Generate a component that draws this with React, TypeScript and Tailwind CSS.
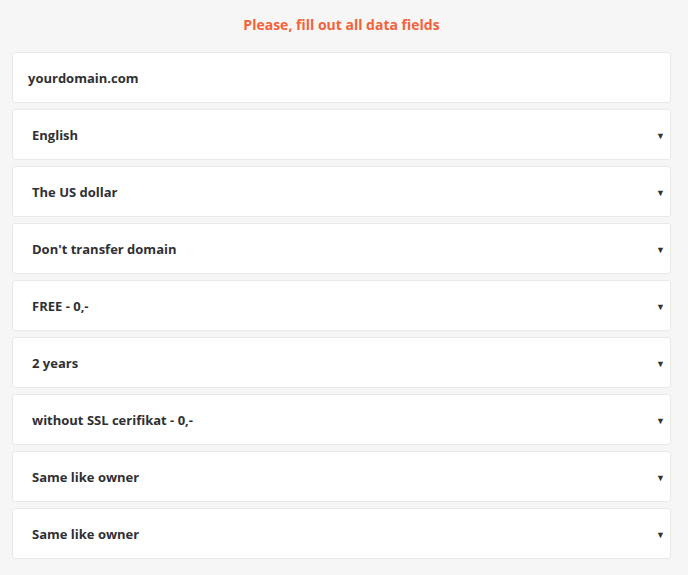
import React from "react";

const selects = [
  "English",
  "The US dollar",
  "Don't transfer domain",
  "FREE - 0,-",
  "2 years",
  "without SSL cerifikat - 0,-",
  "Same like owner",
  "Same like owner",
];

export default function App() {
  return (
    <div
      className="min-h-[575px] bg-[#f6f6f6] px-3 pb-4 pt-[15px]"
      style={{ fontFamily: '"Open Sans", sans-serif' }}
    >
      <div className="w-[659px]">
        <h1 className="text-center text-[14px] font-bold leading-[19px] text-[#f4623a]">
          Please, fill out all data fields
        </h1>
        <div className="mt-[18px] flex flex-col gap-[6px]">
          <div className="flex h-[51px] items-center rounded-[3px] border border-[#e9e9e9] bg-white pl-[15px] pt-[2px]">
            <span className="text-[13px] font-bold text-[#2f3033]">yourdomain.com</span>
          </div>
          {selects.map((s, i) => (
            <div
              key={i}
              className="flex h-[51px] items-center justify-between rounded-[3px] border border-[#e9e9e9] bg-white pl-[19px] pr-[5px] pt-[2px]"
            >
              <span className="text-[13px] font-bold text-[#2f3033]">{s}</span>
              <span className="text-[9px] leading-none text-[#333]">▼</span>
            </div>
          ))}
        </div>
      </div>
    </div>
  );
}
